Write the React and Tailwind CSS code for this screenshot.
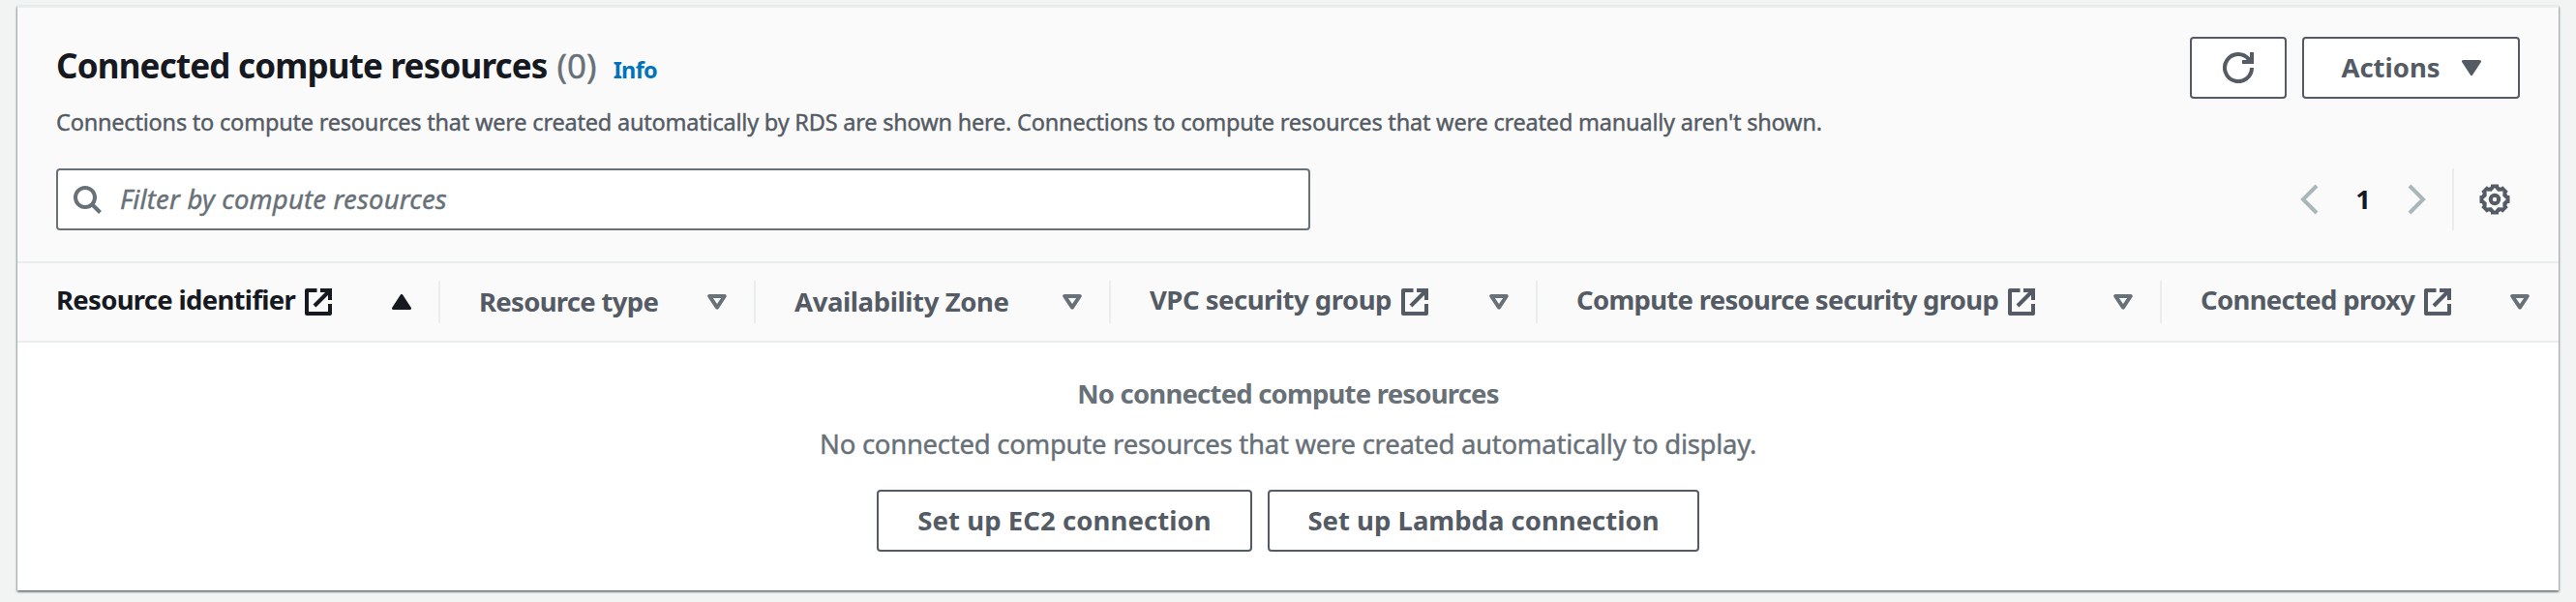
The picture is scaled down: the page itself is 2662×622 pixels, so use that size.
function ExternalIcon({ className = "" }) {
  return (
    <svg className={`h-7 w-7 shrink-0 ${className}`} viewBox="0 0 28 28" fill="none" stroke="currentColor" strokeWidth="4">
      <path d="M12.5 2H2v24h24V16" strokeLinejoin="round" />
      <path d="M16 2h10v10" />
      <path d="M10 18 25 3" />
    </svg>
  );
}

function SortIcon({ active }) {
  return active ? (
    <svg className="h-4 w-5 shrink-0 text-[#16191f]" viewBox="0 0 20 16">
      <path d="M10 1.5 18.5 14.5h-17z" fill="currentColor" stroke="currentColor" strokeWidth="3" strokeLinejoin="round" />
    </svg>
  ) : (
    <svg className="h-4 w-5 shrink-0 text-[#687078]" viewBox="0 0 20 16">
      <path d="M2.2 2h15.6L10 13.6z" fill="none" stroke="currentColor" strokeWidth="4" strokeLinejoin="round" />
    </svg>
  );
}

function SearchIcon() {
  return (
    <svg className="h-8 w-8 shrink-0 text-[#687078]" viewBox="0 0 32 32" fill="none" stroke="currentColor" strokeWidth="4">
      <circle cx="14" cy="14" r="10" />
      <path d="m21 21 8.5 8.5" />
    </svg>
  );
}

function RefreshIcon() {
  return (
    <svg className="h-8 w-8" viewBox="0 0 32 32" fill="none" stroke="currentColor" strokeWidth="4">
      <path d="M30 16A14 14 0 1 1 27 7.4" />
      <path d="M30 0v10H20" />
      <path d="M24 9 28 5v4z" fill="currentColor" stroke="none" />
    </svg>
  );
}

function ring(offsets) {
  const points = Array.from({ length: 8 }, (_, i) =>
    offsets.map(([offset, radius]) => {
      const angle = ((i * 45 + offset) * Math.PI) / 180;
      return `${(16 + radius * Math.sin(angle)).toFixed(2)} ${(16 - radius * Math.cos(angle)).toFixed(2)}`;
    })
  ).flat();
  return `M${points.join("L")}Z`;
}

const gearTeeth = ring([[-14, 16], [14, 16], [18, 13.8], [27, 13.8]]);
const gearCutout = ring([[0, 12], [22.5, 9]]);

function GearIcon() {
  return (
    <svg className="h-8 w-8 text-[#545b64]" viewBox="0 0 32 32" fill="none">
      <path d={`${gearTeeth}${gearCutout}`} fill="currentColor" fillRule="evenodd" />
      <circle cx="16" cy="16" r="4.2" stroke="currentColor" strokeWidth="4" />
    </svg>
  );
}

function Chevron({ right }) {
  return (
    <svg className="h-8 w-5 text-[#aab7b8]" viewBox="0 0 20 32" fill="none" stroke="currentColor" strokeWidth="4">
      <path d={right ? "M2 2l14 14L2 30" : "M18 2 4 16l14 14"} />
    </svg>
  );
}

function Button({ className = "", children }) {
  return (
    <button
      type="button"
      className={`flex h-16 items-center justify-center rounded-[4px] border-2 border-[#545b64] bg-white text-[27.5px] leading-10 font-bold whitespace-nowrap text-[#545b64] ${className}`}
    >
      {children}
    </button>
  );
}

const columns = [
  { label: "Resource identifier", tracking: "tracking-[-0.7px]", external: true, active: true },
  { label: "Resource type", tracking: "tracking-[-0.7px]" },
  { label: "Availability Zone", tracking: "tracking-[-0.4px]" },
  { label: "VPC security group", tracking: "tracking-[-0.5px]", external: true },
  { label: "Compute resource security group", tracking: "tracking-[-0.71px]", external: true },
  { label: "Connected proxy", tracking: "tracking-[-0.68px]", external: true },
];

function ColumnHeader({ column, last }) {
  return (
    <div
      className={`flex h-11 items-center justify-between pl-10 ${last ? "pr-[30px]" : "border-r-2 border-[#eaeded] pr-7"} ${column.active ? "text-[#16191f]" : "text-[#545b64]"}`}
    >
      <div className={`flex items-center gap-2.5 ${column.external ? "pb-[5px]" : "pb-px"}`}>
        <span className={`text-[27.5px] leading-10 font-bold whitespace-nowrap ${column.tracking}`}>{column.label}</span>
        {column.external && <ExternalIcon className="mt-1" />}
      </div>
      <SortIcon active={column.active} />
    </div>
  );
}

export default function App() {
  return (
    <div className="h-[622px] w-full bg-[#f2f3f3] px-[18px] pt-1.5 font-['Noto_Sans',sans-serif]">
      <section className="h-[604px] border-t-2 border-[#eaeded] bg-white shadow-[0_2px_2px_0_rgba(0,28,36,0.3),1px_1px_2px_0_rgba(0,28,36,0.3),-1px_1px_2px_0_rgba(0,28,36,0.3)]">
        <header className="h-[264px] border-b-2 border-[#eaeded] bg-[#fafafa] px-10 pt-[30px]">
          <div className="flex justify-between">
            <div className="pt-2">
              <div className="flex h-11 items-baseline">
                <h2 className="text-[35px] leading-11 font-bold tracking-[-0.82px] whitespace-nowrap text-[#16191f]">
                  Connected compute resources
                  <span className="ml-2.5 font-normal tracking-normal text-[#687078] [-webkit-text-stroke:0.4px]">(0)</span>
                </h2>
                <a className="ml-[17px] text-[23.5px] font-bold tracking-[-0.7px] text-[#0073bb]">Info</a>
              </div>
              <p className="mt-[18px] text-[23.5px] leading-9 tracking-[-0.205px] whitespace-nowrap text-[#545b64] [-webkit-text-stroke:0.4px]">
                Connections to compute resources that were created automatically by RDS are shown here. Connections to
                compute resources that were created manually aren't shown.
              </p>
            </div>
            <div className="flex gap-4">
              <Button className="w-[100px]">
                <RefreshIcon />
              </Button>
              <Button className="w-[225px] gap-[22px]">
                Actions
                <svg className="h-4 w-5" viewBox="0 0 20 16">
                  <path d="M1.5 1.5h17L10 14.5z" fill="currentColor" stroke="currentColor" strokeWidth="3" strokeLinejoin="round" />
                </svg>
              </Button>
            </div>
          </div>
          <div className="mt-[30px] flex items-center justify-between">
            <div className="flex h-16 w-[1296px] items-center gap-[18px] rounded-[4px] border-2 border-[#687078] bg-white pl-3.5">
              <SearchIcon />
              <span className="text-[27.5px] leading-10 tracking-[0.17px] text-[#687078] italic [-webkit-text-stroke:0.4px]">
                Filter by compute resources
              </span>
            </div>
            <div className="flex h-16 items-center">
              <Chevron />
              <span className="w-[92px] text-center text-[27.5px] leading-10 font-bold text-[#16191f]">1</span>
              <Chevron right />
              <div className="ml-[26px] flex h-16 items-center border-l-2 border-[#eaeded] pr-2.5 pl-[26px]">
                <GearIcon />
              </div>
            </div>
          </div>
        </header>
        <div className="grid h-[82px] grid-cols-[437px_326px_367px_441px_645px_410px] items-center border-b-2 border-[#eaeded] bg-[#fafafa]">
          {columns.map((column, i) => (
            <ColumnHeader key={column.label} column={column} last={i === columns.length - 1} />
          ))}
        </div>
        <div className="flex flex-col items-center pt-[33px] text-[27.5px] leading-10 text-[#687078]">
          <b className="font-bold tracking-[-0.8px]">No connected compute resources</b>
          <p className="mt-3 tracking-[-0.27px] [-webkit-text-stroke:0.4px]">
            No connected compute resources that were created automatically to display.
          </p>
          <div className="mt-[27px] flex gap-4">
            <Button className="w-[388px] tracking-[0.07px]">Set up EC2 connection</Button>
            <Button className="w-[446px]">Set up Lambda connection</Button>
          </div>
        </div>
      </section>
    </div>
  );
}
